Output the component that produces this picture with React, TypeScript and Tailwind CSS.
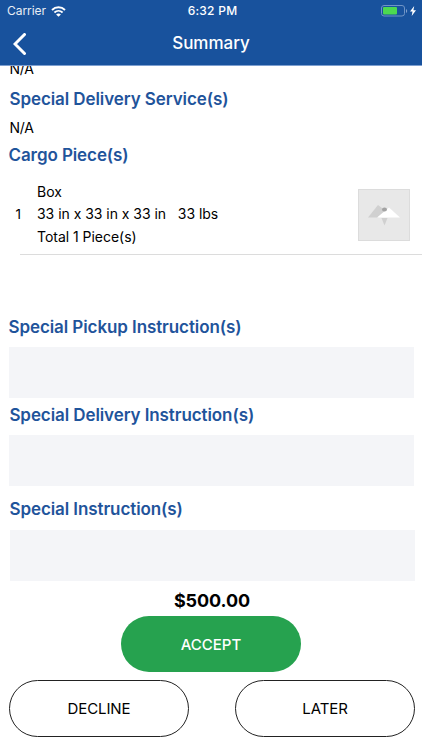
import type { ReactNode } from "react";

function StatusBar() {
  return (
    <div className="flex h-[22px] items-center justify-between pr-[6px] pl-[7px] text-[12px] leading-[22px]">
      <div className="flex flex-1 items-center gap-[5px]">
        <span className="tracking-[-0.05px] opacity-90">Carrier</span>
        <svg width="15" height="11" viewBox="0 0 15 11" fill="none" stroke="white" strokeWidth="1.9">
          <path d="M1 4C4.7.4 10.3.4 14 4" />
          <path d="M3.4 6.5c2.4-2.2 5.8-2.2 8.2 0" />
          <path d="M7.5 10.8 5.1 8.4c1.4-1.2 3.4-1.2 4.8 0Z" fill="white" stroke="none" />
        </svg>
      </div>
      <span className="pl-[2px] font-medium tracking-[0.25px]">6:32 PM</span>
      <div className="flex flex-1 items-center justify-end gap-[2px]">
        <svg width="27" height="12" viewBox="0 0 27 12">
          <rect x="0.5" y="0.5" width="23" height="10.5" rx="2.5" fill="none" stroke="#6f94c6" />
          <rect x="2" y="2" width="14" height="7.5" rx="1" fill="#4cd950" />
          <path d="M25 4v4c1.6-.5 1.6-3.5 0-4Z" fill="#7fa0cc" />
        </svg>
        <svg width="6" height="10" viewBox="0 0 6 10">
          <path d="M4.2 0 0 5.6h2.5L1.7 10 6 4.2H3.4Z" fill="white" />
        </svg>
      </div>
    </div>
  );
}

function Header() {
  return (
    <header className="h-[66px] shrink-0 border-b border-[#7d9fd0] bg-[#18529d] text-white">
      <StatusBar />
      <div className="flex h-[43px] items-center pl-[13px]">
        <button className="w-[40px]">
          <svg width="14" height="22" viewBox="0 0 14 22" fill="none" stroke="white" strokeWidth="3">
            <path d="M11.5 1.5 2 11l9.5 9.5" strokeLinecap="round" />
          </svg>
        </button>
        <h1 className="flex-1 pt-[1px] pr-[53px] text-center text-[17px] font-medium">Summary</h1>
      </div>
    </header>
  );
}

function Heading({ children }: { children: ReactNode }) {
  return (
    <h2 className="text-[17px] leading-[24px] font-semibold tracking-[-0.09px] text-[#1f549b]">
      {children}
    </h2>
  );
}

function TextBox() {
  return <div className="h-[51px] w-[405px] bg-[#f4f5f8]" />;
}

function Thumbnail() {
  return (
    <svg width="52" height="52" viewBox="0 0 52 52">
      <rect x="0.5" y="0.5" width="51" height="51" fill="#e8e8e8" stroke="#dcdcdc" />
      <path d="M10 28.5 20 16l8 6-8 6.5Z" fill="#d0d0d0" />
      <path d="M23.5 29h6l-3 7.5Z" fill="#d0d0d0" />
      <path d="M19 28.5 31 18.5l11 10Z" fill="white" />
      <ellipse cx="26.5" cy="20.5" rx="2.5" ry="2" fill="#a3a3a3" />
    </svg>
  );
}

function CargoRow() {
  return (
    <div className="flex h-[76px] items-center">
      <span className="-mt-[1px] w-[37px] pl-[15.5px] text-[13.5px]">1</span>
      <div className="-mt-px flex-1 text-[14px] leading-[22.3px] tracking-[-0.03px]">
        <p>Box</p>
        <p className="whitespace-pre">33 in x 33 in x 33 in   33 lbs</p>
        <p>Total 1 Piece(s)</p>
      </div>
      <div className="pr-[12px]">
        <Thumbnail />
      </div>
    </div>
  );
}

export default function App() {
  return (
    <div className="flex h-[750px] w-[422px] flex-col overflow-hidden bg-white font-[Inter,sans-serif] text-black">
      <Header />
      <main className="flex-1 overflow-hidden">
        <p className="-mt-[7px] pl-[9.5px] text-[14px] leading-[20px] tracking-[-0.3px]">N/A</p>
        <div className="pt-[8px] pl-[9.5px]">
          <Heading>Special Delivery Service(s)</Heading>
          <p className="pt-[7px] text-[14px] leading-[20px] tracking-[-0.3px]">N/A</p>
        </div>
        <div className="pt-[5px] pl-[8.5px]">
          <Heading>Cargo Piece(s)</Heading>
        </div>
        <div className="pt-[10px]">
          <CargoRow />
          <div className="mt-[1px] ml-[20px] h-px bg-[#dcdcdc]" />
        </div>
        <section className="pt-[60px] pl-[8.5px]">
          <Heading>Special Pickup Instruction(s)</Heading>
          <div className="pt-[8px]">
            <TextBox />
          </div>
        </section>
        <section className="pt-[5px] pl-[9.4px]">
          <Heading>Special Delivery Instruction(s)</Heading>
          <div className="pt-[8px]">
            <TextBox />
          </div>
        </section>
        <section className="pt-[11px] pl-[9.5px]">
          <Heading>Special Instruction(s)</Heading>
          <div className="pt-[9px]">
            <TextBox />
          </div>
        </section>
        <p className="pt-[8px] pl-[2px] text-center text-[18px] leading-[24px] font-bold tracking-[-0.1px]">
          $500.00
        </p>
        <div className="flex justify-center pt-[3px]">
          <button className="h-[56px] w-[180px] rounded-full bg-[#26a24f] pt-[2px] text-[15px] font-medium text-white">
            ACCEPT
          </button>
        </div>
        <div className="flex justify-between pt-[8px] pr-[7px] pl-[9px] text-[15px] tracking-[-0.1px]">
          <button className="h-[57px] w-[180px] rounded-full border border-[#222] pt-[2px]">
            DECLINE
          </button>
          <button className="h-[57px] w-[180px] rounded-full border border-[#222] pt-[2px]">
            LATER
          </button>
        </div>
      </main>
    </div>
  );
}
